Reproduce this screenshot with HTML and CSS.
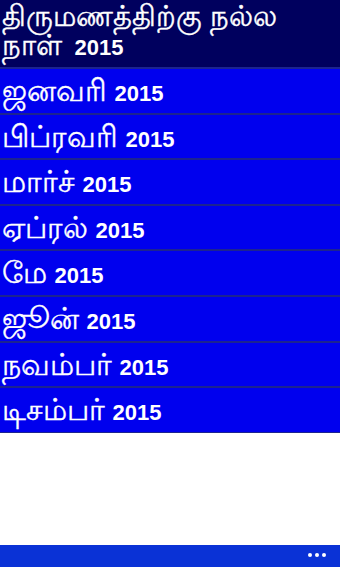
FILE: index.html
```html
<!DOCTYPE html>
<html lang="ta">
<head>
    <meta charset="UTF-8">
    <meta name="viewport" content="width=device-width, initial-scale=1.0">
    <title>திருமணத்திற்கு நல்ல நாள் 2015</title>
    <link rel="stylesheet" href="styles.css">
</head>
<body>
    <div class="page">
        <div class="header"><span class="ta">திருமணத்திற்கு நல்ல நாள்</span> <b class="year">2015</b></div>
        <div class="month-list">
            <div class="month"><span class="ta">ஜனவரி</span> <b class="year">2015</b></div>
            <div class="month"><span class="ta">பிப்ரவரி</span> <b class="year">2015</b></div>
            <div class="month"><span class="ta">மார்ச்</span> <b class="year">2015</b></div>
            <div class="month"><span class="ta">ஏப்ரல்</span> <b class="year">2015</b></div>
            <div class="month"><span class="ta">மே</span> <b class="year">2015</b></div>
            <div class="month"><span class="ta">ஜூன்</span> <b class="year">2015</b></div>
            <div class="month"><span class="ta">நவம்பர்</span> <b class="year">2015</b></div>
            <div class="month"><span class="ta">டிசம்பர்</span> <b class="year">2015</b></div>
        </div>
        <div class="spacer"></div>
        <div class="app-bar">
            <div class="more">
                <span class="dot"></span>
                <span class="dot"></span>
                <span class="dot"></span>
            </div>
        </div>
    </div>
</body>
</html>
```

FILE: styles.css
```css
body {
    margin: 0;
    background-color: #ffffff;
    font-family: "Liberation Sans", Arial, sans-serif;
    color: #ffffff;
}

.page {
    display: flex;
    flex-direction: column;
    height: 100vh;
}

.ta {
    font-size: 30px;
    -webkit-text-stroke: 0.4px #ffffff;
}

.year {
    font-size: 22px;
    margin-left: 3px;
}

.header {
    background-color: #00005e;
    height: 67px;
    box-sizing: border-box;
    padding: 4px 2px 0 2px;
    line-height: 24px;
}

.header .ta {
    font-size: 29px;
}

.header .year {
    margin-left: 8px;
}

.month-list {
    display: flex;
    flex-direction: column;
}

.month {
    background-color: #0000ee;
    border-top: 2px solid #1c2490;
    height: 43.6px;
    line-height: 44px;
    padding: 0 2px;
    white-space: nowrap;
}

.month:last-child {
    border-bottom: 1px solid #1c2490;
}

.spacer {
    flex: 1;
}

.app-bar {
    background-color: #0a32d6;
    height: 22px;
    display: flex;
    justify-content: flex-end;
    align-items: center;
    padding-right: 14px;
}

.more {
    display: flex;
    gap: 3px;
    margin-top: -2px;
}

.dot {
    width: 4px;
    height: 4px;
    border-radius: 50%;
    background-color: #ffffff;
}
```
